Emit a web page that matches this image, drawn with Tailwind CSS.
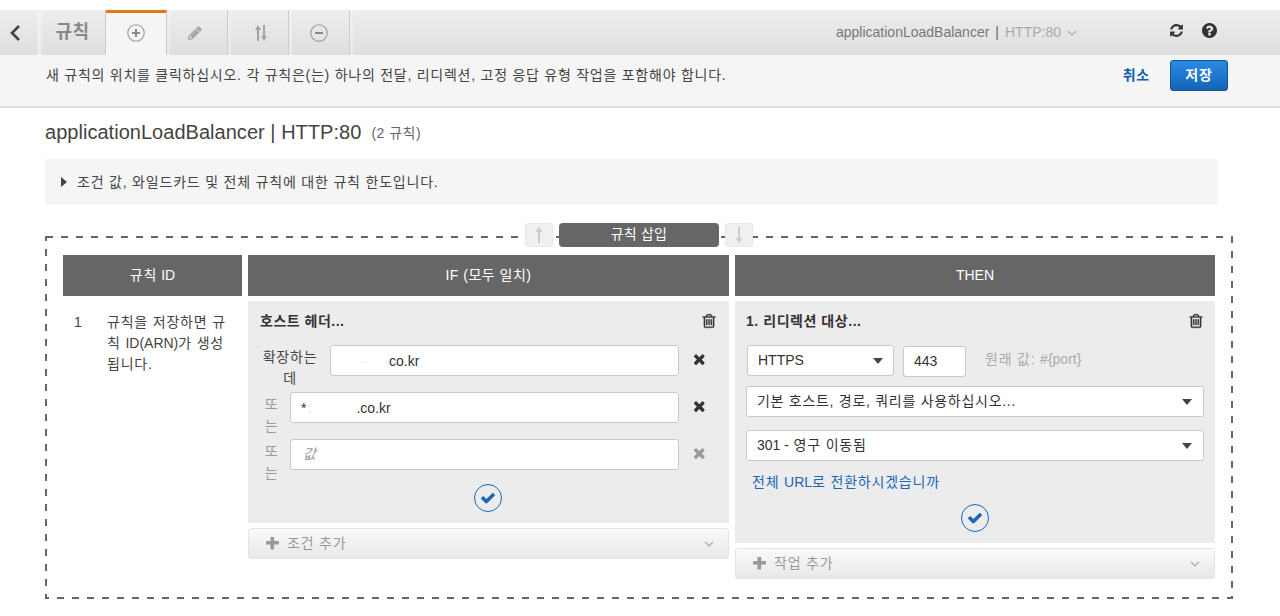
<!DOCTYPE html>
<html lang="ko">
<head>
  <meta charset="UTF-8" />
  <title>규칙</title>
  <script src="https://cdn.jsdelivr.net/npm/@tailwindcss/browser@4"></script>
</head>
<body class="h-[616px] overflow-hidden bg-white text-[14px] tracking-[0.8px] text-[#444] font-['Liberation_Sans','Noto_Sans_CJK_KR',sans-serif]">

  <!-- toolbar -->
  <div class="mt-[10px] flex h-[45px] bg-gradient-to-b from-[#f2f2f2] to-[#e8e8e8]">
    <div class="flex w-[39px] items-center justify-center border-r border-[#f4f4f4] bg-gradient-to-b from-[#eeeeee] to-[#dedede]">
      <svg class="mr-[8px] h-[18px] w-[12px]" viewBox="0 0 12 18" fill="none" stroke="#444" stroke-width="2.6"><path d="M10 2 3 9l7 7"/></svg>
    </div>
    <div class="ml-[3px] flex w-[64px] items-center justify-center border-r border-[#ccc] bg-gradient-to-b from-[#eeeeee] to-[#dedede] pr-[2px] text-[18px] font-bold tracking-[0.5px] text-[#888]">규칙</div>
    <div class="flex w-[61px] items-center justify-center border-t-[3px] border-r border-[#ccc] border-t-[#e47911] bg-[#f5f5f5] pb-[2px]">
      <svg class="h-[18px] w-[18px]" viewBox="0 0 18 18" fill="none" stroke="#999" stroke-width="1.1"><circle cx="9" cy="9" r="8.2"/><path d="M5 9h8M9 5v8" stroke="#888" stroke-width="2"/></svg>
    </div>
    <div class="ml-[3px] flex w-[58px] items-center justify-center border-r border-[#ccc] bg-gradient-to-b from-[#eeeeee] to-[#dedede]">
      <svg class="mr-[7px] h-[16px] w-[16px]" viewBox="0 0 1792 1792" fill="#a3a3a3"><path d="M491 1536l91-91-235-235-91 91v107h128v128h107zm523-928q0-22-22-22-10 0-17 7l-542 542q-7 7-7 17 0 22 22 22 10 0 17-7l542-542q7-7 7-17zm-54-192l416 416-832 832h-416v-416zm683 96q0 53-37 90l-166 166-416-416 166-165q36-38 90-38 53 0 91 38l235 234q37 39 37 91z"/></svg>
    </div>
    <div class="ml-[3px] flex w-[58px] items-center justify-center border-r border-[#ccc] bg-gradient-to-b from-[#eeeeee] to-[#dedede]">
      <svg class="ml-[3px] h-[18px] w-[12px]" viewBox="0 0 12 18" fill="#a3a3a3"><path d="M3 1 0 6h2v11h2V6h2zM9 17l3-5h-2V1H8v11H6z"/></svg>
    </div>
    <div class="ml-[3px] flex w-[58px] items-center justify-center border-r border-[#ccc] bg-gradient-to-b from-[#eeeeee] to-[#dedede]">
      <svg class="mr-[3px] h-[18px] w-[18px]" viewBox="0 0 18 18" fill="none" stroke="#999" stroke-width="1.1"><circle cx="9" cy="9" r="8.2"/><path d="M5 9h8" stroke="#888" stroke-width="2"/></svg>
    </div>
    <div class="ml-[3px] flex flex-1 items-center bg-gradient-to-b from-[#eeeeee] to-[#dedede] pr-[63px] tracking-normal">
      <div class="ml-[483px] flex items-center text-[#777]">
        <span>applicationLoadBalancer</span>
        <span class="ml-[6px] text-[#666]">|</span>
        <span class="ml-[6px] text-[#aaa]">HTTP:80</span>
        <svg class="ml-[6px] h-[6px] w-[10px]" viewBox="0 0 10 6" fill="none" stroke="#aaa" stroke-width="1.2"><path d="m1 1 4 4 4-4"/></svg>
      </div>
      <div class="ml-auto flex items-center gap-[18px] pb-[4px]">
        <svg class="h-[15px] w-[15px]" viewBox="0 0 1792 1792" fill="#333"><path d="M1639 1056q0 5-1 7-64 268-268 434.500t-478 166.500q-146 0-282.500-55t-243.500-157l-129 129q-19 19-45 19t-45-19-19-45v-448q0-26 19-45t45-19h448q26 0 45 19t19 45-19 45l-137 137q71 66 161 102t187 36q134 0 250-65t186-179q11-17 53-117 8-23 30-23h192q13 0 22.500 9.500t9.500 22.500zm25-800v448q0 26-19 45t-45 19h-448q-26 0-45-19t-19-45 19-45l138-138q-148-137-349-137-134 0-250 65t-186 179q-11 17-53 117-8 23-30 23h-199q-13 0-22.500-9.500t-9.500-22.500v-7q65-268 270-434.500t480-166.500q146 0 284 55.500t245 156.500l130-129q19-19 45-19t45 19 19 45z"/></svg>
        <svg class="h-[15px] w-[15px]" viewBox="128 128 1536 1536" fill="#333"><path d="M1024 1376v-192q0-14-9-23t-23-9h-192q-14 0-23 9t-9 23v192q0 14 9 23t23 9h192q14 0 23-9t9-23zm256-672q0-88-55.500-163t-138.500-116-170-41q-243 0-371 213-15 24 8 42l132 100q7 6 19 6 16 0 25-12 53-68 86-92 34-24 86-24 48 0 85.500 26t37.500 59q0 38-20 61t-68 45q-63 28-115.500 86.500t-52.500 125.500v36q0 14 9 23t23 9h192q14 0 23-9t9-23q0-19 21.500-49.500t54.500-49.500q32-18 49-28.500t46-35 44.500-48 28-60.500 12.500-81zm384 192q0 209-103 385.500t-279.500 279.500-385.500 103-385.500-103-279.500-279.500-103-385.500 103-385.500 279.500-279.500 385.500-103 385.500 103 279.500 279.500 103 385.500z"/></svg>
      </div>
    </div>
  </div>

  <!-- info bar -->
  <div class="flex h-[51px] items-start bg-[#f5f5f5] pl-[46px] pr-[52px] shadow-[0_2px_1px_#e0e0e0]">
    <p class="mt-[11px] flex-1 leading-[18px] tracking-[0.75px]">새 규칙의 위치를 클릭하십시오. 각 규칙은(는) 하나의 전달, 리디렉션, 고정 응답 유형 작업을 포함해야 합니다.</p>
    <a class="mt-[11px] leading-[18px] font-bold text-[#0f5fae]">취소</a>
    <button class="ml-[20px] mt-[5px] h-[31px] w-[58px] rounded-[3px] border border-[#15528f] bg-gradient-to-b from-[#2a8ae8] to-[#1265b5] font-bold text-white">저장</button>
  </div>

  <!-- title -->
  <div class="ml-[45px] mt-[13px] flex h-[26px] items-center">
    <h1 class="text-[20px] tracking-[0.03px] text-[#444]">applicationLoadBalancer | HTTP:80</h1>
    <span class="ml-[10px] mt-[2px] tracking-[0.5px] text-[#666]">(2 규칙)</span>
  </div>

  <!-- collapsible note -->
  <div class="ml-[45px] mt-[14px] flex h-[46px] w-[1173px] items-center bg-[#f5f5f5] pl-[16px]">
    <svg class="mr-[10px] h-[10px] w-[6px]" viewBox="0 0 6 10" fill="#444"><path d="M0 0l6 5-6 5z"/></svg>
    조건 값, 와일드카드 및 전체 규칙에 대한 규칙 한도입니다.
  </div>

  <!-- rule box -->
  <div class="relative ml-[45px] mt-[31px] h-[363px] w-[1188px] pl-[18px] pt-[19px]">
    <svg class="absolute left-0 top-0 h-[363px] w-[1188px]" viewBox="0 0 1188 363" fill="none" stroke="#666" stroke-width="2" stroke-dasharray="7 8"><rect x="1" y="1" width="1186" height="361"/></svg>

    <div class="absolute left-[480px] top-[-13px] flex items-start gap-[6px]">
      <div class="flex h-[24px] w-[28px] items-center justify-center rounded-[3px] border border-[#e8e8e8] bg-[#f0f0f0]">
        <svg class="h-[16px] w-[8px]" viewBox="0 0 8 16" fill="#ccc"><path d="M4 0 .5 5H3v11h2V5h2.500z"/></svg>
      </div>
      <div class="flex h-[24px] w-[160px] items-center justify-center rounded-[4px] bg-[#666] pb-[1px] tracking-[0.2px] text-white">규칙 삽입</div>
      <div class="flex h-[24px] w-[28px] items-center justify-center rounded-[3px] border border-[#e8e8e8] bg-[#f0f0f0]">
        <svg class="h-[16px] w-[8px]" viewBox="0 0 8 16" fill="#ccc"><path d="M4 16 .5 11H3V0h2v11h2.500z"/></svg>
      </div>
    </div>

    <div class="relative flex gap-[6px]">
      <!-- id column -->
      <div class="w-[179px]">
        <div class="flex h-[41px] items-center justify-center gap-[4px] bg-[#666] text-white"><span>규칙</span><span class="tracking-normal">ID</span></div>
        <div class="mt-[5px] flex pl-[11px] pt-[11px] leading-[21px]">
          <span class="w-[33px] shrink-0">1</span>
          <span class="w-[124px] break-all">규칙을 저장하면 규칙 <span class="tracking-normal">ID(ARN)</span>가 생성됩니다.</span>
        </div>
      </div>

      <!-- if column -->
      <div class="w-[481px]">
        <div class="flex h-[41px] items-center justify-center bg-[#666] tracking-[0.5px] text-white">IF (모두 일치)</div>
        <div class="mt-[5px] h-[222px] bg-[#ececec] pl-[12px] pr-[12px] pt-[11px]">
          <div class="flex h-[18px] items-center justify-between">
            <span class="pt-[1px] font-bold tracking-[0.5px] text-[#333]">호스트 헤더...</span>
            <svg class="h-[16px] w-[16px]" viewBox="0 0 1792 1792" fill="#333" stroke="#333" stroke-width="40"><path d="M704 736v576q0 14-9 23t-23 9h-64q-14 0-23-9t-9-23v-576q0-14 9-23t23-9h64q14 0 23 9t9 23zm256 0v576q0 14-9 23t-23 9h-64q-14 0-23-9t-9-23v-576q0-14 9-23t23-9h64q14 0 23 9t9 23zm256 0v576q0 14-9 23t-23 9h-64q-14 0-23-9t-9-23v-576q0-14 9-23t23-9h64q14 0 23 9t9 23zm128 724v-948h-896v948q0 22 7 40.500t14.500 27 10.500 8.500h832q3 0 10.500-8.500t14.500-27 7-40.500zm-672-1076h448l-48-117q-7-9-17-11h-317q-10 2-17 11zm928 32v64q0 14-9 23t-23 9h-96v948q0 83-47 143.500t-113 60.500h-832q-66 0-113-58.500t-47-141.500v-952h-96q-14 0-23-9t-9-23v-64q0-14 9-23t23-9h309l70-167q15-37 54-63t79-26h320q40 0 79 26t54 63l70 167h309q14 0 23 9t9 23z"/></svg>
          </div>

          <div class="mt-[15px] flex h-[47px] items-start">
            <span class="w-[70px] pr-[10px] pt-[2px] text-center leading-[21px]">확장하는 데</span>
            <div class="flex h-[31px] w-[349px] items-center rounded-[3px] border border-[#c8c8c8] bg-white pl-[30px] pt-[1px] tracking-normal text-[#333]"><span class="w-[28px] text-[9px] text-[#ddd]">...</span>co.kr</div>
            <svg class="ml-[14px] mt-[7px] h-[16px] w-[16px]" viewBox="0 0 1792 1792" fill="#333"><path d="M1298 1214q0 40-28 68l-136 136q-28 28-68 28t-68-28l-294-294-294 294q-28 28-68 28t-68-28l-136-136q-28-28-28-68t28-68l294-294-294-294q-28-28-28-68t28-68l136-136q28-28 68-28t68 28l294 294 294-294q28-28 68-28t68 28l136 136q28 28 28 68t-28 68l-294 294 294 294q28 28 28 68z"/></svg>
          </div>
          <div class="flex h-[47px] items-start">
            <span class="w-[30px] break-all pl-0 pr-[7px] pt-[1px] text-center leading-[22px] text-[#999]">또는</span>
            <div class="flex h-[31px] w-[389px] items-center rounded-[3px] border border-[#c8c8c8] bg-white pl-[10px] pt-[1px] tracking-normal text-[#333]">*<span class="w-[50px] pl-[1px] text-[#e4d8c8]">:</span>.co.kr</div>
            <svg class="ml-[14px] mt-[7px] h-[16px] w-[16px]" viewBox="0 0 1792 1792" fill="#333"><path d="M1298 1214q0 40-28 68l-136 136q-28 28-68 28t-68-28l-294-294-294 294q-28 28-68 28t-68-28l-136-136q-28-28-28-68t28-68l294-294-294-294q-28-28-28-68t28-68l136-136q28-28 68-28t68 28l294 294 294-294q28-28 68-28t68 28l136 136q28 28 28 68t-28 68l-294 294 294 294q28 28 28 68z"/></svg>
          </div>
          <div class="flex h-[47px] items-start">
            <span class="w-[30px] break-all pl-0 pr-[7px] pt-[1px] text-center leading-[22px] text-[#999]">또는</span>
            <div class="flex h-[31px] w-[389px] items-center rounded-[3px] border border-[#c8c8c8] bg-white pl-[12px] italic text-[#999]">값</div>
            <svg class="ml-[14px] mt-[7px] h-[16px] w-[16px]" viewBox="0 0 1792 1792" fill="#999"><path d="M1298 1214q0 40-28 68l-136 136q-28 28-68 28t-68-28l-294-294-294 294q-28 28-68 28t-68-28l-136-136q-28-28-28-68t28-68l294-294-294-294q-28-28-28-68t28-68l136-136q28-28 68-28t68 28l294 294 294-294q28-28 68-28t68 28l136 136q28 28 28 68t-28 68l-294 294 294 294q28 28 28 68z"/></svg>
          </div>
          <div class="-mt-[2px] flex justify-center pr-[2px]">
            <div class="flex h-[28px] w-[28px] items-center justify-center rounded-full border border-[#1a66b8]">
              <svg class="h-[16px] w-[16px]" viewBox="0 0 1792 1792" fill="#1a66b8"><path d="M1671 566q0 40-28 68l-724 724-136 136q-28 28-68 28t-68-28l-136-136-362-362q-28-28-28-68t28-68l136-136q28-28 68-28t68 28l294 295 656-657q28-28 68-28t68 28l136 136q28 28 28 68z"/></svg>
            </div>
          </div>
        </div>
        <div class="mt-[5px] flex h-[31px] items-center rounded-[3px] border border-[#e4e4e4] bg-gradient-to-b from-[#fafafa] to-[#e8e8e8] pl-[17px] pr-[14px] text-[#999]">
          <svg class="mr-[8px] h-[13px] w-[13px]" viewBox="224 224 1376 1376" fill="#999"><path d="M1600 736v192q0 40-28 68t-68 28h-416v416q0 40-28 68t-68 28h-192q-40 0-68-28t-28-68v-416h-416q-40 0-68-28t-28-68v-192q0-40 28-68t68-28h416v-416q0-40 28-68t68-28h192q40 0 68 28t28 68v416h416q40 0 68 28t28 68z"/></svg>
          <span class="flex-1">조건 추가</span>
          <svg class="h-[6px] w-[10px]" viewBox="0 0 10 6" fill="none" stroke="#aaa" stroke-width="1.2"><path d="m1 1 4 4 4-4"/></svg>
        </div>
      </div>

      <!-- then column -->
      <div class="w-[480px]">
        <div class="flex h-[41px] items-center justify-center bg-[#666] tracking-normal text-white">THEN</div>
        <div class="mt-[5px] h-[242px] bg-[#ececec] pl-[11px] pr-[11px] pt-[11px]">
          <div class="flex h-[18px] items-center justify-between">
            <span class="pt-[1px] font-bold tracking-[0.55px] text-[#333]">1. 리디렉션 대상...</span>
            <svg class="h-[16px] w-[16px]" viewBox="0 0 1792 1792" fill="#333" stroke="#333" stroke-width="40"><path d="M704 736v576q0 14-9 23t-23 9h-64q-14 0-23-9t-9-23v-576q0-14 9-23t23-9h64q14 0 23 9t9 23zm256 0v576q0 14-9 23t-23 9h-64q-14 0-23-9t-9-23v-576q0-14 9-23t23-9h64q14 0 23 9t9 23zm256 0v576q0 14-9 23t-23 9h-64q-14 0-23-9t-9-23v-576q0-14 9-23t23-9h64q14 0 23 9t9 23zm128 724v-948h-896v948q0 22 7 40.500t14.500 27 10.500 8.500h832q3 0 10.500-8.500t14.500-27 7-40.500zm-672-1076h448l-48-117q-7-9-17-11h-317q-10 2-17 11zm928 32v64q0 14-9 23t-23 9h-96v948q0 83-47 143.500t-113 60.500h-832q-66 0-113-58.500t-47-141.500v-952h-96q-14 0-23-9t-9-23v-64q0-14 9-23t23-9h309l70-167q15-37 54-63t79-26h320q40 0 79 26t54 63l70 167h309q14 0 23 9t9 23z"/></svg>
          </div>
          <div class="mt-[15px] flex items-start pl-[1px]">
            <div class="flex h-[31px] w-[147px] items-center justify-between rounded-[3px] border border-[#c8c8c8] bg-white pl-[10px] pr-[10px] tracking-normal text-[#333]">
              HTTPS
              <svg class="h-[6px] w-[10px]" viewBox="0 0 10 6" fill="#444"><path d="M0 0h10L5 6z"/></svg>
            </div>
            <div class="ml-[9px] mt-[1px] flex h-[31px] w-[63px] items-center rounded-[3px] border border-[#c8c8c8] bg-white pl-[10px] tracking-normal text-[#333]">443</div>
            <span class="ml-[19px] mt-[4px] text-[#aaa]">원래 값: <span class="tracking-normal">#{port}</span></span>
          </div>
          <div class="mt-[9px] flex h-[31px] items-center justify-between rounded-[3px] border border-[#c8c8c8] bg-white pl-[10px] pr-[11px] tracking-[0.72px] text-[#333]">
            기본 호스트, 경로, 쿼리를 사용하십시오...
            <svg class="h-[6px] w-[10px]" viewBox="0 0 10 6" fill="#444"><path d="M0 0h10L5 6z"/></svg>
          </div>
          <div class="mt-[13px] flex h-[31px] items-center justify-between rounded-[3px] border border-[#c8c8c8] bg-white pl-[10px] pr-[11px] text-[#333]">
            <span><span class="tracking-normal">301 -</span> 영구 이동됨</span>
            <svg class="h-[6px] w-[10px]" viewBox="0 0 10 6" fill="#444"><path d="M0 0h10L5 6z"/></svg>
          </div>
          <a class="mt-[12px] block pl-[6px] leading-[18px] text-[#1a66b8]">전체 <span class="tracking-normal">URL</span>로 전환하시겠습니까</a>
          <div class="mt-[13px] flex justify-center">
            <div class="flex h-[28px] w-[28px] items-center justify-center rounded-full border border-[#1a66b8]">
              <svg class="h-[16px] w-[16px]" viewBox="0 0 1792 1792" fill="#1a66b8"><path d="M1671 566q0 40-28 68l-724 724-136 136q-28 28-68 28t-68-28l-136-136-362-362q-28-28-28-68t28-68l136-136q28-28 68-28t68 28l294 295 656-657q28-28 68-28t68 28l136 136q28 28 28 68z"/></svg>
            </div>
          </div>
        </div>
        <div class="mt-[5px] flex h-[31px] items-center rounded-[3px] border border-[#e4e4e4] bg-gradient-to-b from-[#fafafa] to-[#e8e8e8] pl-[17px] pr-[14px] text-[#999]">
          <svg class="mr-[8px] h-[13px] w-[13px]" viewBox="224 224 1376 1376" fill="#999"><path d="M1600 736v192q0 40-28 68t-68 28h-416v416q0 40-28 68t-68 28h-192q-40 0-68-28t-28-68v-416h-416q-40 0-68-28t-28-68v-192q0-40 28-68t68-28h416v-416q0-40 28-68t68-28h192q40 0 68 28t28 68v416h416q40 0 68 28t28 68z"/></svg>
          <span class="flex-1">작업 추가</span>
          <svg class="h-[6px] w-[10px]" viewBox="0 0 10 6" fill="none" stroke="#aaa" stroke-width="1.2"><path d="m1 1 4 4 4-4"/></svg>
        </div>
      </div>
    </div>
  </div>
</body>
</html>
